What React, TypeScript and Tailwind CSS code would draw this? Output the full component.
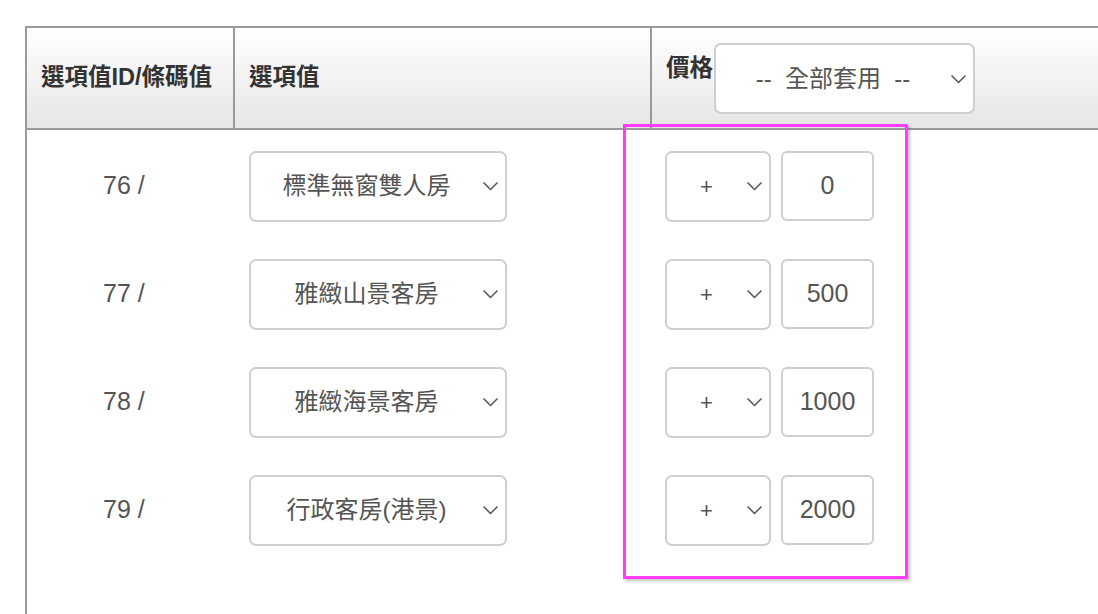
const rows = [
  { id: 76, name: '標準無窗雙人房', price: '0' },
  { id: 77, name: '雅緻山景客房', price: '500' },
  { id: 78, name: '雅緻海景客房', price: '1000' },
  { id: 79, name: '行政客房(港景)', price: '2000' },
];

function Chevron() {
  return (
    <svg width="17" height="10" viewBox="0 0 17 10" fill="none" className="shrink-0">
      <polyline points="1.5,1.5 8.5,8.5 15.5,1.5" stroke="#555" strokeWidth="1.5" />
    </svg>
  );
}

// fake select box: label centred in the space left of the chevron
function SelectBox({ label, className }: { label: string; className: string }) {
  return (
    <div
      className={`flex items-center bg-white border-2 border-[#cfcfcf] rounded-[7px] pr-[6px] ${className}`}
    >
      <span className="flex-1 text-center whitespace-pre">{label}</span>
      <Chevron />
    </div>
  );
}

export default function App() {
  return (
    <div className="relative w-[1098px] h-[614px] overflow-hidden bg-white font-['Liberation_Sans','Noto_Sans_CJK_TC',sans-serif] text-[24px] text-[#555]">
      <div className="pt-[26px] pl-[25px]">
        <div className="w-[1200px] h-[700px] border-l-2 border-[#9a9a9a]">
          {/* Header */}
          <div className="flex h-[104px] border-y-2 border-[#9a9a9a] bg-gradient-to-b from-white to-[#e6e6e6] text-[#333] font-bold">
            <div className="w-[206px] flex items-center pl-[14px] text-[23.5px]">選項值ID/條碼值</div>
            <div className="w-[417px] flex items-center pl-[14px] border-l-2 border-[#9a9a9a] text-[23.5px]">選項值</div>
            <div className="flex-1 flex items-start pl-[14px] pt-[15px] border-l-2 border-[#9a9a9a]">
              <span className="mt-[8px] mr-[1px] text-[23.5px]">價格</span>
              <SelectBox label="--  全部套用  --" className="w-[261px] h-[71px] font-normal text-[#555]" />
            </div>
          </div>

          {/* Body */}
          <div className="pt-[2px]">
            {rows.map((r) => (
              <div key={r.id} className="flex h-[108px] items-center">
                <div className="w-[208px] pl-[76px] text-[25px]">{r.id} /</div>
                <div className="w-[417px] pl-[14px]">
                  <SelectBox label={r.name} className="w-[258px] h-[71px]" />
                </div>
                <div className="flex-1 flex items-center gap-[10px] pl-[13px]">
                  <SelectBox label="+" className="w-[106px] h-[71px] text-[22px]" />
                  <div className="w-[93px] h-[70px] flex items-center justify-center bg-white border-2 border-[#cfcfcf] rounded-[6px] text-[25px]">
                    {r.price}
                  </div>
                </div>
              </div>
            ))}
          </div>
        </div>
      </div>

      {/* highlight annotation */}
      <div className="absolute left-[623px] top-[124px] w-[285px] h-[455px] border-[3px] border-[#ff3cff] shadow-[2px_2px_3px_rgba(0,0,0,0.25)]" />
    </div>
  );
}
